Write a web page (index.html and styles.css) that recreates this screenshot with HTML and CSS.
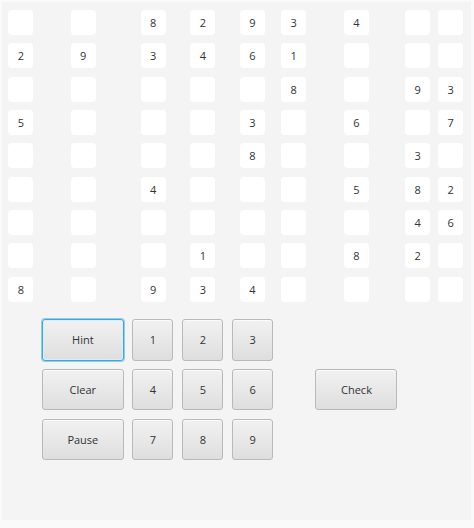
FILE: index.html
```html
<!DOCTYPE html>
<html>
<head>
<meta charset="utf-8">
<link rel="stylesheet" href="styles.css">
</head>
<body>
<div class="frame">
  <div class="panel">
    <div class="board">
      <div class="cell"></div><div class="cell"></div><div class="cell">8</div><div class="cell">2</div><div class="cell">9</div><div class="cell">3</div><div class="cell">4</div><div class="cell"></div><div class="cell"></div>
      <div class="cell">2</div><div class="cell">9</div><div class="cell">3</div><div class="cell">4</div><div class="cell">6</div><div class="cell">1</div><div class="cell"></div><div class="cell"></div><div class="cell"></div>
      <div class="cell"></div><div class="cell"></div><div class="cell"></div><div class="cell"></div><div class="cell"></div><div class="cell">8</div><div class="cell"></div><div class="cell">9</div><div class="cell">3</div>
      <div class="cell">5</div><div class="cell"></div><div class="cell"></div><div class="cell"></div><div class="cell">3</div><div class="cell"></div><div class="cell">6</div><div class="cell"></div><div class="cell">7</div>
      <div class="cell"></div><div class="cell"></div><div class="cell"></div><div class="cell"></div><div class="cell">8</div><div class="cell"></div><div class="cell"></div><div class="cell">3</div><div class="cell"></div>
      <div class="cell"></div><div class="cell"></div><div class="cell">4</div><div class="cell"></div><div class="cell"></div><div class="cell"></div><div class="cell">5</div><div class="cell">8</div><div class="cell">2</div>
      <div class="cell"></div><div class="cell"></div><div class="cell"></div><div class="cell"></div><div class="cell"></div><div class="cell"></div><div class="cell"></div><div class="cell">4</div><div class="cell">6</div>
      <div class="cell"></div><div class="cell"></div><div class="cell"></div><div class="cell">1</div><div class="cell"></div><div class="cell"></div><div class="cell">8</div><div class="cell">2</div><div class="cell"></div>
      <div class="cell">8</div><div class="cell"></div><div class="cell">9</div><div class="cell">3</div><div class="cell">4</div><div class="cell"></div><div class="cell"></div><div class="cell"></div><div class="cell"></div>
    </div>
    <div class="controls">
      <button class="btn focused">Hint</button>
      <button class="btn">1</button>
      <button class="btn">2</button>
      <button class="btn">3</button>
      <div class="spacer"></div>
      <button class="btn">Clear</button>
      <button class="btn">4</button>
      <button class="btn">5</button>
      <button class="btn">6</button>
      <button class="btn check">Check</button>
      <button class="btn">Pause</button>
      <button class="btn">7</button>
      <button class="btn">8</button>
      <button class="btn">9</button>
      <div class="spacer"></div>
    </div>
  </div>
</div>
</body>
</html>
```

FILE: styles.css
```css
html, body {
  margin: 0;
  padding: 0;
  background: #fafafa;
}
body {
  font-family: "Open Sans", "Noto Sans", "DejaVu Sans", sans-serif;
  color: #333;
}
.frame {
  width: 474px;
  height: 528px;
  box-sizing: border-box;
  padding: 2px 3px 8px 2px;
}
.panel {
  background: #f4f4f4;
  height: 100%;
  box-sizing: border-box;
  padding-top: 8px;
}
.board {
  display: grid;
  grid-template-columns: 62.4px 70px 49.6px 49.7px 41.3px 62.7px 61.3px 33px 25px;
  grid-auto-rows: 25px;
  row-gap: 8.33px;
  padding-left: 6.3px;
}
.cell {
  width: 25px;
  height: 25px;
  background: #fff;
  border-radius: 4px;
  display: flex;
  align-items: center;
  justify-content: center;
  font-size: 11px;
  color: #333;
}
.controls {
  display: grid;
  grid-template-columns: 81.7px 41px 41px 41px 82px;
  grid-auto-rows: 41.3px;
  column-gap: 8.8px;
  row-gap: 8.5px;
  margin-top: 17.7px;
  padding-left: 40px;
}
.btn {
  font-family: inherit;
  font-size: 11px;
  color: #333;
  margin: 0;
  padding: 0;
  border: 1px solid #b9b9b9;
  border-radius: 3px;
  background: linear-gradient(to bottom, #f1f1f1 0%, #e8e8e8 50%, #dedede 100%);
  box-shadow: inset 0 1px 0 #fbfbfb;
}
.btn.focused {
  border: 1px solid #3fa6d8;
  box-shadow: 0 0 0 1px #8fcdee, inset 0 0 0 1px #d8eef9;
}
.btn.check {
  margin-left: 33.6px;
  width: 82px;
}
```
